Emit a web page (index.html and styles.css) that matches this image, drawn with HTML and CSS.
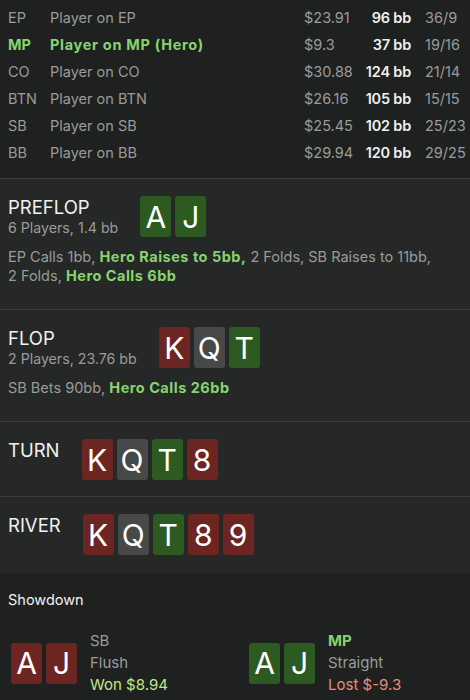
FILE: index.html
```html
<!DOCTYPE html>
<html>
<head>
<meta charset="utf-8">
<link rel="stylesheet" href="styles.css">
</head>
<body>
<div class="players">
  <div class="prow"><span class="pos">EP</span><span class="name">Player on EP</span><span class="usd">$23.91</span><span class="bb">96 bb</span><span class="rec">36/9</span></div>
  <div class="prow hero"><span class="pos">MP</span><span class="name">Player on MP (Hero)</span><span class="usd">$9.3</span><span class="bb">37 bb</span><span class="rec">19/16</span></div>
  <div class="prow"><span class="pos">CO</span><span class="name">Player on CO</span><span class="usd">$30.88</span><span class="bb">124 bb</span><span class="rec">21/14</span></div>
  <div class="prow"><span class="pos">BTN</span><span class="name">Player on BTN</span><span class="usd">$26.16</span><span class="bb">105 bb</span><span class="rec">15/15</span></div>
  <div class="prow"><span class="pos">SB</span><span class="name">Player on SB</span><span class="usd">$25.45</span><span class="bb">102 bb</span><span class="rec">25/23</span></div>
  <div class="prow"><span class="pos">BB</span><span class="name">Player on BB</span><span class="usd">$29.94</span><span class="bb">120 bb</span><span class="rec">29/25</span></div>
</div>

<section class="street with-actions">
  <div class="head">
    <div class="titles">
      <div class="title">PREFLOP</div>
      <div class="sub">6 Players, 1.4 bb</div>
    </div>
    <div class="cards"><span class="card g">A</span><span class="card g">J</span></div>
  </div>
  <p class="actions"><span>EP Calls 1bb,</span> <b>Hero Raises to 5bb,</b> <span>2 Folds, SB Raises to 11bb,</span> <span>2 Folds,</span> <b>Hero Calls 6bb</b></p>
</section>

<section class="street with-actions">
  <div class="head">
    <div class="titles">
      <div class="title">FLOP</div>
      <div class="sub">2 Players, 23.76 bb</div>
    </div>
    <div class="cards"><span class="card r">K</span><span class="card k">Q</span><span class="card g">T</span></div>
  </div>
  <p class="actions"><span>SB Bets 90bb,</span> <b>Hero Calls 26bb</b></p>
</section>

<section class="street">
  <div class="head">
    <div class="titles"><div class="title">TURN</div></div>
    <div class="cards"><span class="card r">K</span><span class="card k">Q</span><span class="card g">T</span><span class="card r">8</span></div>
  </div>
</section>

<section class="street last">
  <div class="head">
    <div class="titles"><div class="title">RIVER</div></div>
    <div class="cards"><span class="card r">K</span><span class="card k">Q</span><span class="card g">T</span><span class="card r">8</span><span class="card r">9</span></div>
  </div>
</section>

<div class="showdown">
  <div class="sd-title">Showdown</div>
  <div class="hands">
    <div class="hand">
      <div class="cards"><span class="card r">A</span><span class="card r">J</span></div>
      <div class="hinfo">
        <div class="hpos">SB</div>
        <div class="hrank">Flush</div>
        <div class="won">Won $8.94</div>
      </div>
    </div>
    <div class="hand">
      <div class="cards"><span class="card g">A</span><span class="card g">J</span></div>
      <div class="hinfo">
        <div class="hpos herotxt">MP</div>
        <div class="hrank">Straight</div>
        <div class="lost">Lost $-9.3</div>
      </div>
    </div>
  </div>
</div>
</body>
</html>
```

FILE: styles.css
```css
html, body {
  margin: 0;
  padding: 0;
  background: #1e211f;
}
body {
  font-family: Inter, "Noto Sans", "Liberation Sans", sans-serif;
  font-size: 14.5px;
  color: #e9e9e9;
  width: 470px;
  height: 700px;
  overflow: hidden;
}
.players {
  padding: 4px 0 12px 8px;
  background: #1e211f;
}
.prow {
  display: grid;
  grid-template-columns: 42px 1fr 62px 45px 59px;
  height: 27px;
  align-items: center;
  color: #9b9b9b;
  white-space: nowrap;
}
.prow .bb {
  display: flex;
  justify-content: flex-end;
  color: #f0f0f0;
  font-weight: 600;
  letter-spacing: -0.2px;
}
.prow .rec {
  padding-left: 14px;
}
.prow.hero .pos,
.prow.hero .name {
  color: #86d46f;
  font-weight: 700;
}
.prow.hero .name {
  letter-spacing: 0.7px;
}
.street {
  background: #252826;
  border-top: 1px solid #393c3a;
  padding: 17px 8px 16px 8px;
}
.street.with-actions {
  padding-bottom: 24px;
}
.street.last {
  padding-bottom: 18px;
}
.head {
  display: flex;
  align-items: flex-start;
  gap: 22px;
}
.title {
  font-size: 18.5px;
  line-height: 23px;
  color: #f2f2f2;
}
.sub {
  font-size: 14.2px;
  line-height: 18px;
  color: #9b9b9b;
}
.cards {
  display: flex;
  gap: 4px;
}
.card {
  width: 31px;
  height: 41px;
  border-radius: 3px;
  display: flex;
  align-items: center;
  justify-content: center;
  font-size: 30px;
  color: #ffffff;
}
.card.g { background: #2c5a21; }
.card.r { background: #6d2522; }
.card.k { background: #474848; }
.actions {
  margin: 10px 0 0 0;
  max-width: 432px;
  font-size: 14.5px;
  line-height: 19px;
  color: #9b9b9b;
}
.actions b {
  color: #86d46f;
  font-weight: 700;
  letter-spacing: 0.5px;
}
.showdown {
  background: #1e211f;
  padding: 17px 8px 0 8px;
}
.sd-title {
  font-size: 14.5px;
  line-height: 20px;
  color: #f2f2f2;
}
.hands {
  display: grid;
  grid-template-columns: 238px 1fr;
  margin-top: 20px;
  padding-left: 3px;
}
.hand {
  display: flex;
  align-items: center;
  gap: 13px;
}
.hinfo {
  font-size: 15px;
  line-height: 22px;
  color: #9b9b9b;
}
.herotxt {
  color: #86d46f;
  font-weight: 700;
}
.won { color: #c1e784; }
.lost { color: #ec8a7c; }
```
